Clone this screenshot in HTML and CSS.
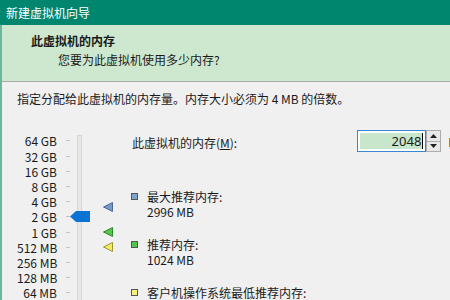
FILE: index.html
```html
<!DOCTYPE html>
<html lang="zh-CN">
<head>
<meta charset="utf-8">
<title>新建虚拟机向导</title>
<link rel="stylesheet" href="styles.css">
</head>
<body>
<div class="window">
  <div class="titlebar">新建虚拟机向导</div>
  <div class="frame">
    <div class="header">
      <div class="h-title">此虚拟机的内存</div>
      <div class="h-sub">您要为此虚拟机使用多少内存?</div>
    </div>
    <div class="content">
      <p class="intro">指定分配给此虚拟机的内存量。内存大小必须为 4 MB 的倍数。</p>
      <div class="main">
        <div class="slider">
          <ul class="scale">
            <li><span class="lbl">64 GB</span><span class="tick"></span></li>
            <li><span class="lbl">32 GB</span><span class="tick"></span></li>
            <li><span class="lbl">16 GB</span><span class="tick"></span></li>
            <li><span class="lbl">8 GB</span><span class="tick"></span></li>
            <li><span class="lbl">4 GB</span><span class="tick"></span></li>
            <li><span class="lbl">2 GB</span><span class="tick"></span></li>
            <li><span class="lbl">1 GB</span><span class="tick"></span></li>
            <li><span class="lbl">512 MB</span><span class="tick"></span></li>
            <li><span class="lbl">256 MB</span><span class="tick"></span></li>
            <li><span class="lbl">128 MB</span><span class="tick"></span></li>
            <li><span class="lbl">64 MB</span><span class="tick"></span></li>
          </ul>
          <div class="track"></div>
          <svg class="thumb" width="20" height="11" viewBox="0 0 20 11"><polygon points="0,5.5 6,0 20,0 20,11 6,11" fill="#0a74d4"/></svg>
          <svg class="marker m-max" width="10" height="10" viewBox="0 0 10 10"><polygon points="0.5,5 9.5,0.5 9.5,9.5" fill="#7b98c9" stroke="#4c6898"/></svg>
          <svg class="marker m-rec" width="10" height="10" viewBox="0 0 10 10"><polygon points="0.5,5 9.5,0.5 9.5,9.5" fill="#56c24f" stroke="#2f8a2a"/></svg>
          <svg class="marker m-min" width="10" height="10" viewBox="0 0 10 10"><polygon points="0.5,5 9.5,0.5 9.5,9.5" fill="#f1ea63" stroke="#9d9630"/></svg>
        </div>
        <div class="right">
          <div class="mem-row">
            <span class="mem-label">此虚拟机的内存(<u>M</u>):</span>
            <div class="spin">
              <div class="spin-input"><span class="sel">2048</span><span class="caret"></span></div>
              <div class="spin-btns">
                <span class="btn"><svg width="7" height="4" viewBox="0 0 7 4"><polygon points="3.5,0 7,4 0,4" fill="#222"/></svg></span>
                <span class="btn"><svg width="7" height="4" viewBox="0 0 7 4"><polygon points="0,0 7,0 3.5,4" fill="#222"/></svg></span>
              </div>
            </div>
            <span class="unit">MB</span>
          </div>
          <div class="legend">
            <div class="item"><span class="sq sq-blue"></span><div class="txt"><div>最大推荐内存:</div><div>2996 MB</div></div></div>
            <div class="item"><span class="sq sq-green"></span><div class="txt"><div>推荐内存:</div><div>1024 MB</div></div></div>
            <div class="item"><span class="sq sq-yellow"></span><div class="txt"><div>客户机操作系统最低推荐内存:</div><div>512 MB</div></div></div>
          </div>
        </div>
      </div>
    </div>
  </div>
</div>
</body>
</html>
```
FILE: styles.css
```css
* { box-sizing: border-box; }
html, body { margin: 0; padding: 0; }
body {
  width: 450px;
  height: 300px;
  overflow: hidden;
  background: #f0f0f0;
  font-family: "Noto Sans CJK SC", "Noto Sans", sans-serif;
  font-size: 12px;
  color: #1a1a1a;
}
.window { width: 450px; height: 300px; overflow: hidden; display: flex; flex-direction: column; }
.titlebar {
  height: 25px;
  line-height: 25px;
  background: #00866e;
  color: #fff;
  padding-left: 6px;
  font-size: 12px;
  flex: none;
}
.frame {
  flex: 1;
  border-left: 2px solid #69b89c;
  display: flex;
  flex-direction: column;
  min-height: 0;
}
.header {
  height: 57px;
  background: #cde8cf;
  border-bottom: 1px solid #a9a9a9;
  padding-top: 8px;
  flex: none;
}
.h-title { font-weight: bold; line-height: 16px; padding-left: 29px; }
.h-sub { line-height: 16px; padding-left: 56px; margin-top: 3px; }
.content { padding: 9px 0 0 15px; flex: 1; min-height: 0; }
.intro { margin: 0; line-height: 16px; white-space: nowrap; }
.main { display: flex; margin-top: 23px; width: 449px; }
.slider { position: relative; width: 114px; flex: none; display: flex; height: 200px; }
.scale { list-style: none; margin: 0; padding: 3.4px 0 0 0; }
.scale li { display: flex; align-items: center; height: 15.2px; }
.lbl { width: 40px; text-align: right; white-space: nowrap; line-height: 15px; }
.tick { width: 4px; height: 1px; background: #c4c4c4; margin-left: 9px; }
.track {
  width: 5px;
  margin-left: 7px;
  margin-top: 5px;
  background: #e7e7e7;
  border: 1px solid #d6d6d6;
  height: 200px;
}
.thumb { position: absolute; left: 53px; top: 81px; }
.marker { position: absolute; left: 86px; }
.m-max { top: 72px; }
.m-rec { top: 97px; }
.m-min { top: 112px; }
.right { flex: 1; min-width: 0; }
.mem-row { display: flex; align-items: center; height: 22px; padding-left: 1px; }
.mem-label { flex: 1; white-space: nowrap; padding-top: 3px; }
.mem-label u { text-decoration: underline; }
.spin { display: flex; height: 22px; width: 84px; flex: none; }
.spin-input {
  width: 69px;
  border: 1px solid #3b86d2;
  background: #fff;
  padding: 2px;
  display: flex;
  justify-content: flex-end;
  align-items: stretch;
}
.sel {
  flex: 1;
  background: #c7e6cb;
  text-align: right;
  line-height: 16px;
  font-family: "Noto Sans", sans-serif;
  font-size: 13px;
  padding-right: 1px;
  height: 16px;
}
.caret { width: 1px; background: #000; height: 16px; }
.spin-btns { width: 15px; display: flex; flex-direction: column; border: 1px solid #adadad; border-left: none; }
.btn { flex: 1; display: flex; align-items: center; justify-content: center; background: #e8e8e8; border-left: 1px solid #adadad; }
.btn + .btn { border-top: 1px solid #adadad; }
.unit { margin-left: 7px; white-space: nowrap; color: #3a1a2a; }
.legend { margin-top: 37px; }
.item { display: flex; margin-bottom: 18px; }
.sq { width: 7px; height: 7px; border: 1px solid #555; margin: 4px 9px 0 0; flex: none; }
.sq-blue { background: #7fa3d2; }
.sq-green { background: #4fc44a; }
.sq-yellow { background: #f6f07c; }
.txt div { line-height: 15px; white-space: nowrap; }
```
